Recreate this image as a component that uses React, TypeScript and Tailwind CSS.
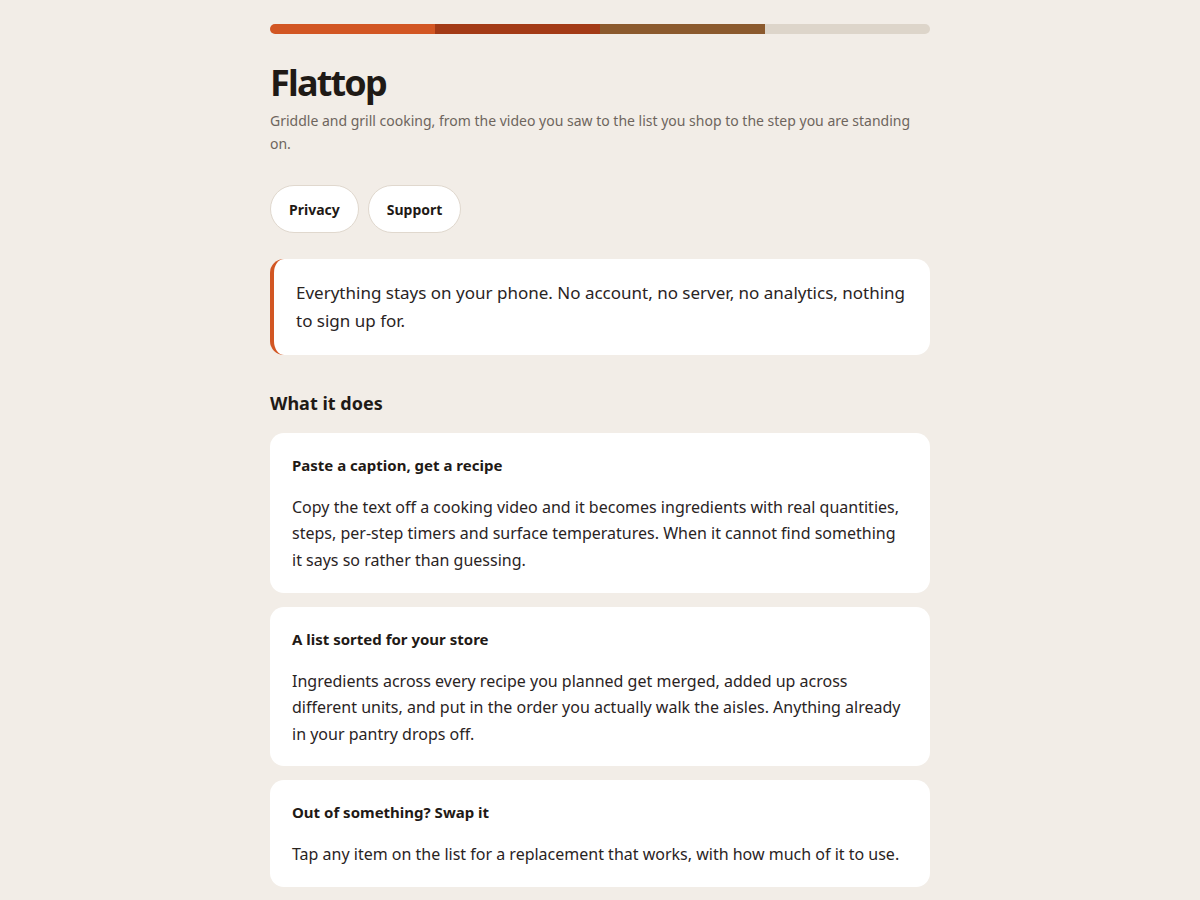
export default function App() {
  const features = [
    {
      title: 'Paste a caption, get a recipe',
      body: 'Copy the text off a cooking video and it becomes ingredients with real quantities, steps, per-step timers and surface temperatures. When it cannot find something it says so rather than guessing.',
    },
    {
      title: 'A list sorted for your store',
      body: 'Ingredients across every recipe you planned get merged, added up across different units, and put in the order you actually walk the aisles. Anything already in your pantry drops off.',
    },
    {
      title: 'Out of something? Swap it',
      body: 'Tap any item on the list for a replacement that works, with how much of it to use.',
    },
  ];

  return (
    <div className="min-h-screen bg-[#f2ede7] text-[#1f1a16] font-['Noto_Sans',sans-serif]">
      <div className="mx-auto w-[660px] pt-6 pb-10">
        <div className="flex h-[10px] overflow-hidden rounded-full">
          <div className="flex-1 bg-[#d25623]" />
          <div className="flex-1 bg-[#a33a16]" />
          <div className="flex-1 bg-[#8b5a2e]" />
          <div className="flex-1 bg-[#ddd5ca]" />
        </div>

        <h1 className="mt-[25px] text-[36px] font-bold leading-[48px] tracking-[-0.05em]">Flattop</h1>
        <p className="mt-[2px] text-[14px] leading-[23px] text-[#6e655d]">
          Griddle and grill cooking, from the video you saw to the list you shop to the step you are standing on.
        </p>

        <div className="mt-[30px] flex gap-[9px]">
          <a className="flex h-[48px] items-center rounded-full border border-[#e0d8ce] bg-white px-[18px] text-[14px] font-bold">Privacy</a>
          <a className="flex h-[48px] items-center rounded-full border border-[#e0d8ce] bg-white px-[18px] text-[14px] font-bold">Support</a>
        </div>

        <div className="mt-[26px] rounded-[14px] border-l-4 border-[#d25623] bg-white py-[20px] pl-[22px] pr-[22px]">
          <p className="text-[17px] leading-[28px] text-[#2a241f]">
            Everything stays on your phone. No account, no server, no analytics, nothing to sign up for.
          </p>
        </div>

        <h2 className="mt-[36px] text-[18px] font-bold leading-[24px]">What it does</h2>

        <div className="mt-[18px] flex flex-col gap-[14px]">
          {features.map((f) => (
            <div key={f.title} className="rounded-[14px] bg-white px-[22px] pt-[22px] pb-[19.5px]">
              <h3 className="text-[15px] font-bold leading-[20px]">{f.title}</h3>
              <p className="mt-[19px] text-[16px] leading-[26.4px] text-[#2a241f]">{f.body}</p>
            </div>
          ))}
        </div>
      </div>
    </div>
  );
}
